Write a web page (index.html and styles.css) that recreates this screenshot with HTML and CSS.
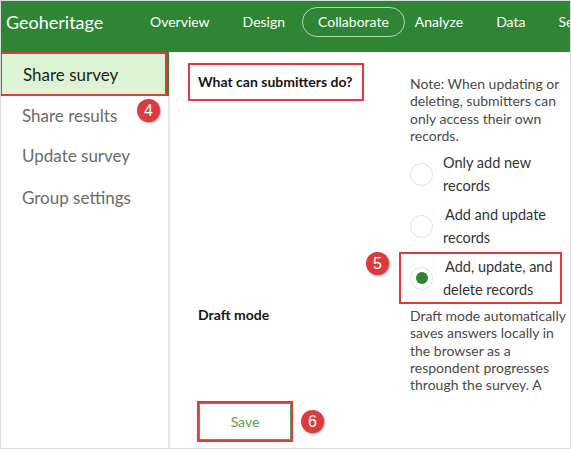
FILE: index.html
```html
<!DOCTYPE html>
<html lang="en">
<head>
    <meta charset="UTF-8">
    <meta name="viewport" content="width=device-width, initial-scale=1.0">
    <title>Geoheritage - Collaborate</title>
    <link rel="stylesheet" href="styles.css">
</head>
<body>
    <div class="frame">
        <!-- top bar -->
        <div class="topbar">
            <div class="brand">Geoheritage</div>
            <div class="tabs">
                <span class="tab">Overview</span>
                <span class="tab">Design</span>
                <span class="tab active">Collaborate</span>
                <span class="tab">Analyze</span>
                <span class="tab">Data</span>
                <span class="tab">Settings</span>
            </div>
        </div>

        <div class="main">
            <!-- left menu -->
            <div class="sidebar">
                <div class="side-item current">Share survey</div>
                <div class="side-item">Share results</div>
                <div class="side-item">Update survey</div>
                <div class="side-item">Group settings</div>
                <span class="badge badge-4">4</span>
            </div>

            <!-- settings -->
            <div class="content">
                <div class="form">
                    <div class="field-label">
                        <span class="label-box">What can submitters do?</span>
                    </div>
                    <div class="field-body">
                        <p class="note">Note: When updating or deleting, submitters can only access their own records.</p>
                        <div class="radio">
                            <span class="circle"></span>
                            <span class="radio-text">Only add new records</span>
                        </div>
                        <div class="radio">
                            <span class="circle"></span>
                            <span class="radio-text indent">Add and update records</span>
                        </div>
                        <div class="radio checked">
                            <span class="circle"><span class="dot"></span></span>
                            <span class="radio-text indent">Add, update, and delete records</span>
                            <span class="badge badge-5">5</span>
                        </div>
                    </div>

                    <div class="field-label draft-label">Draft mode</div>
                    <div class="field-body">
                        <p class="note draft">Draft mode automatically saves answers locally in the browser as a respondent progresses through the survey. A respondent can close the browser and resume later.</p>
                    </div>
                </div>

                <div class="footer">
                    <button class="save-btn">Save</button>
                    <span class="badge badge-6">6</span>
                </div>
            </div>
        </div>
    </div>
</body>
</html>
```

FILE: styles.css
```css
* {
    box-sizing: border-box;
}

body {
    margin: 0;
    font-family: Lato, "Noto Sans", sans-serif;
    background-color: #fff;
}

.frame {
    width: 571px;
    height: 449px;
    border: 1px solid #dcdcdc;
    overflow: hidden;
    display: flex;
    flex-direction: column;
}

/* top bar */
.topbar {
    height: 51px;
    flex-shrink: 0;
    background-color: #2e8533;
    color: #fff;
    display: flex;
    align-items: center;
    padding-bottom: 9px;
    white-space: nowrap;
    overflow: hidden;
}

.brand {
    font-size: 18px;
    padding-left: 5px;
    width: 133px;
    flex-shrink: 0;
}

.tabs {
    display: flex;
    align-items: center;
    gap: 1px;
}

.tab {
    font-size: 14px;
    padding: 0 15px;
    height: 30px;
    line-height: 28px;
    border: 1px solid transparent;
    border-radius: 15px;
}

.tab.active {
    border-color: rgba(255,255,255,0.65);
}

.tab.active + .tab {
    padding-left: 8px;
}

/* body */
.main {
    flex: 1;
    display: flex;
    min-height: 0;
}

.sidebar {
    position: relative;
    width: 169px;
    flex-shrink: 0;
    border-right: 2px solid #e6e6e6;
}

.side-item {
    height: 40px;
    line-height: 40px;
    padding-left: 21px;
    font-size: 17px;
    color: #6b6b6b;
}

.side-item.current {
    height: 44px;
    line-height: 42px;
    color: #1e1e1e;
    background-color: #ddf5d5;
    border: 2px solid #e2393d;
    border-left-width: 1px;
    margin-right: 1px;
    box-shadow: 2px 0 0 #2e8533;
}

.side-item:last-of-type {
    margin-top: 2px;
}

.badge {
    position: absolute;
    width: 23px;
    height: 23px;
    border-radius: 50%;
    background-color: #dc3b3e;
    color: #fff;
    font-family: Arial, "Liberation Sans", sans-serif;
    font-size: 16px;
    line-height: 23px;
    text-align: center;
    box-shadow: 1px 1px 2px rgba(0,0,0,0.35);
}

.badge-4 {
    left: 136px;
    top: 47px;
}

/* content */
.content {
    flex: 1;
    display: flex;
    flex-direction: column;
    padding: 11px 0 0 18px;
}

.form {
    display: grid;
    grid-template-columns: 222px 159px;
}

.field-label {
    font-size: 14px;
    font-weight: bold;
    color: #151515;
    padding-left: 10px;
}

.label-box {
    display: block;
    width: fit-content;
    margin-left: -10px;
    height: 38px;
    line-height: 34px;
    padding: 0 9px 0 8px;
    border: 2px solid #e2393d;
}

.field-body {
    font-size: 14px;
    color: #4a4a4a;
}

.note {
    margin: 12px 0 0;
    line-height: 17.3px;
}

.radio {
    position: relative;
    display: flex;
    align-items: center;
    height: 46px;
    margin-top: 6px;
    font-size: 14.5px;
    line-height: 23px;
    color: #333;
}

.radio:first-of-type {
    margin-top: 7px;
}

.circle {
    width: 23px;
    height: 23px;
    flex-shrink: 0;
    border: 1.5px solid #e0e0e0;
    border-radius: 50%;
    display: flex;
    align-items: center;
    justify-content: center;
    margin-right: 10px;
}

.dot {
    width: 12px;
    height: 12px;
    border-radius: 50%;
    background-color: #2e8533;
}

.radio-text {
    width: 120px;
}

.radio-text.indent {
    text-indent: 2px;
}

.radio.checked::after {
    content: "";
    position: absolute;
    left: -11px;
    right: 7px;
    top: -3px;
    bottom: -3px;
    border: 2px solid #e2393d;
}

.badge-5 {
    left: -44px;
    top: -3px;
}

.draft-label {
    padding-top: 5px;
    line-height: 17px;
}

.note.draft {
    margin-top: 6px;
    height: 91px;
    overflow: hidden;
}

.footer {
    position: relative;
    margin-top: 3px;
    margin-left: 9px;
}

.save-btn {
    width: 96px;
    height: 41px;
    background-color: #fff;
    border: 2px solid #e2393d;
    box-shadow: inset 0 0 0 1px #5a9e4f;
    color: #5a9e4f;
    font-family: Lato, "Noto Sans", sans-serif;
    font-size: 14px;
    padding: 0;
}

.badge-6 {
    left: 104px;
    top: 9px;
}
```
